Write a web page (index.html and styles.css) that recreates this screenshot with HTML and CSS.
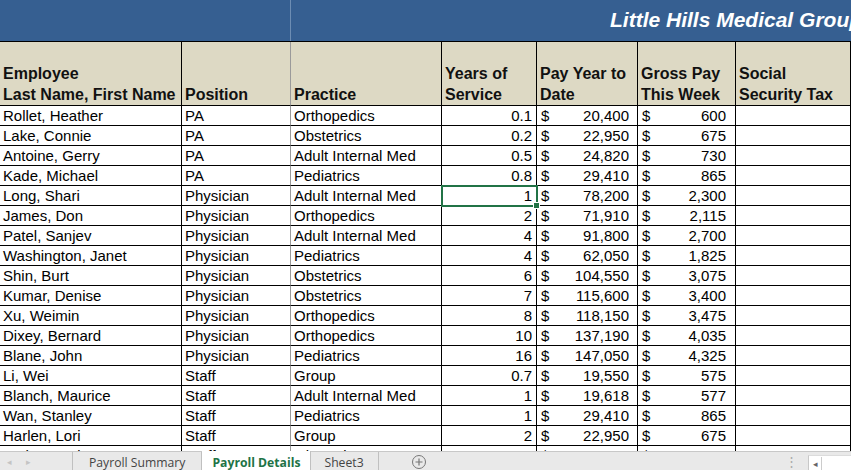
FILE: index.html
```html
<!DOCTYPE html>
<html>
<head>
<meta charset="utf-8">
<link rel="stylesheet" href="styles.css">
</head>
<body>
<div class="sheet">
  <div class="band">
    <div class="band-left"></div>
    <div class="band-right"><span class="title">Little Hills Medical Group</span></div>
  </div>
  <div class="grid">
    <div class="hd">Employee<br>Last Name, First Name</div>
    <div class="hd gl">Position</div>
    <div class="hd">Practice</div>
    <div class="hd">Years of<br>Service</div>
    <div class="hd">Pay Year to<br>Date</div>
    <div class="hd">Gross Pay<br>This Week</div>
    <div class="hd">Social<br>Security Tax</div>
  </div>
  <div class="grid body" id="body"></div>
</div>
<div class="tabbar">
  <div class="nav"><span>&#9666;</span><span>&#9656;</span></div>
  <div class="tab t1">Payroll Summary</div>
  <div class="tab active">Payroll Details</div>
  <div class="tab t3">Sheet3</div>
  <div class="add">
    <svg width="16" height="16" viewBox="0 0 16 16"><circle cx="8" cy="8" r="6.5" fill="none" stroke="#777" stroke-width="1"/><path d="M8 4.5v7M4.5 8h7" stroke="#777" stroke-width="1.2"/></svg>
  </div>
  <div class="spacer"></div>
  <div class="dots">&#8942;</div>
  <div class="hscroll"><span class="arr">&#9666;</span></div>
</div>
<script src="app.js"></script>
</body>
</html>
```
FILE: app.js
```js
const rows = [
  ["Rollet, Heather","PA","Orthopedics","0.1","20,400","600"],
  ["Lake, Connie","PA","Obstetrics","0.2","22,950","675"],
  ["Antoine, Gerry","PA","Adult Internal Med","0.5","24,820","730"],
  ["Kade, Michael","PA","Pediatrics","0.8","29,410","865"],
  ["Long, Shari","Physician","Adult Internal Med","1","78,200","2,300"],
  ["James, Don","Physician","Orthopedics","2","71,910","2,115"],
  ["Patel, Sanjev","Physician","Adult Internal Med","4","91,800","2,700"],
  ["Washington, Janet","Physician","Pediatrics","4","62,050","1,825"],
  ["Shin, Burt","Physician","Obstetrics","6","104,550","3,075"],
  ["Kumar, Denise","Physician","Obstetrics","7","115,600","3,400"],
  ["Xu, Weimin","Physician","Orthopedics","8","118,150","3,475"],
  ["Dixey, Bernard","Physician","Orthopedics","10","137,190","4,035"],
  ["Blane, John","Physician","Pediatrics","16","147,050","4,325"],
  ["Li, Wei","Staff","Group","0.7","19,550","575"],
  ["Blanch, Maurice","Staff","Adult Internal Med","1","19,618","577"],
  ["Wan, Stanley","Staff","Pediatrics","1","29,410","865"],
  ["Harlen, Lori","Staff","Group","2","22,950","675"],
  ["Kotha, Ravi","Staff","Obstetrics","1","26,180","770"]
];
const body = document.getElementById('body');
rows.forEach((r, i) => {
  const cells = [
    `<div class="c">${r[0]}</div>`,
    `<div class="c gl">${r[1]}</div>`,
    `<div class="c">${r[2]}</div>`,
    `<div class="c num${i === 4 ? ' sel' : ''}">${r[3]}</div>`,
    `<div class="c money e"><span>$</span><span>${r[4]}</span></div>`,
    `<div class="c money f"><span>$</span><span>${r[5]}</span></div>`,
    `<div class="c"></div>`
  ];
  body.insertAdjacentHTML('beforeend', cells.join(''));
});
```
FILE: styles.css
```css
html, body {
  margin: 0;
  padding: 0;
  background: #fff;
  overflow: hidden;
}
body {
  width: 851px;
  height: 470px;
  font-family: "Liberation Sans", Arial, sans-serif;
  color: #000;
}
.sheet {
  height: 451px;
  overflow: hidden;
}
.band {
  display: grid;
  grid-template-columns: 291px 1fr;
  height: 42px;
  box-sizing: border-box;
  background: #365f91;
  border-bottom: 1px solid #000;
}
.band-left {
  border-right: 1px solid #6d8db3;
}
.band-right {
  padding-left: 319px;
  white-space: nowrap;
  overflow: hidden;
}
.title {
  color: #fff;
  font-weight: bold;
  font-style: italic;
  font-size: 21px;
  line-height: 40px;
}
.grid {
  display: grid;
  grid-template-columns: 182px 109px 151px 95px 101px 98px 1fr;
}
.hd {
  box-sizing: border-box;
  height: 64px;
  background: #ddd9c4;
  border-right: 1px solid #000;
  border-bottom: 1px solid #000;
  display: flex;
  flex-direction: column;
  justify-content: flex-end;
  padding: 0 3px 0 3px;
  font-weight: bold;
  font-size: 16px;
  line-height: 21px;
  color: #111;
  white-space: nowrap;
}
.gl {
  border-right-color: #9a9a9a !important;
}
.body {
  grid-auto-rows: 20px;
}
.c {
  box-sizing: border-box;
  height: 20px;
  border-right: 1px solid #000;
  border-bottom: 1px solid #000;
  padding: 0 3px;
  font-size: 15px;
  line-height: 20px;
  white-space: nowrap;
  overflow: hidden;
}
.num {
  text-align: right;
  padding-right: 4px;
  overflow: visible;
}
.money {
  display: flex;
  justify-content: space-between;
  padding-left: 4px;
}
.money.e { padding-right: 8px; }
.money.f { padding-right: 9px; }
.sel {
  position: relative;
  outline: 2px solid #217346;
  outline-offset: -1px;
  z-index: 2;
}
.sel::after {
  content: "";
  position: absolute;
  right: -4px;
  bottom: -4px;
  width: 5px;
  height: 5px;
  background: #217346;
  border: 1px solid #fff;
}
.tabbar {
  height: 19px;
  box-sizing: border-box;
  background: #e9e9e9;
  border-top: 1px solid #c8c8c8;
  display: flex;
  align-items: stretch;
  font-family: "Open Sans", "Noto Sans", sans-serif;
  font-size: 12.2px;
  color: #444;
}
.nav {
  width: 73px;
  display: flex;
  gap: 14px;
  padding-left: 7px;
  align-items: center;
  color: #c4c4c4;
  font-size: 9px;
  border-right: 1px solid #c0c0c0;
  box-sizing: border-box;
}
.tab {
  display: flex;
  align-items: center;
  padding: 2px 16px 0 16px;
  border-right: 1px solid #c0c0c0;
  line-height: 17px;
}
.tab.t3 {
  padding: 2px 14px 0 13px;
}
.tab.active {
  background: #fff;
  color: #217346;
  font-weight: bold;
  margin-top: -1px;
  padding: 3px 10px 0 10px;
}
.add {
  width: 80px;
  display: flex;
  align-items: center;
  justify-content: center;
  padding-top: 2px;
}
.spacer { flex: 1; }
.dots {
  display: flex;
  align-items: center;
  color: #aaa;
  font-size: 13px;
  padding-right: 10px;
}
.hscroll {
  width: 43px;
  background: #fff;
  border-left: 1px solid #c8c8c8;
  border-top: 1px solid #dcdcdc;
  margin-top: 3px;
  display: flex;
  align-items: center;
  padding-left: 4px;
  box-sizing: border-box;
}
.arr {
  font-size: 9px;
  color: #666;
  border-right: 1px solid #ccc;
  padding-right: 3px;
}
```
